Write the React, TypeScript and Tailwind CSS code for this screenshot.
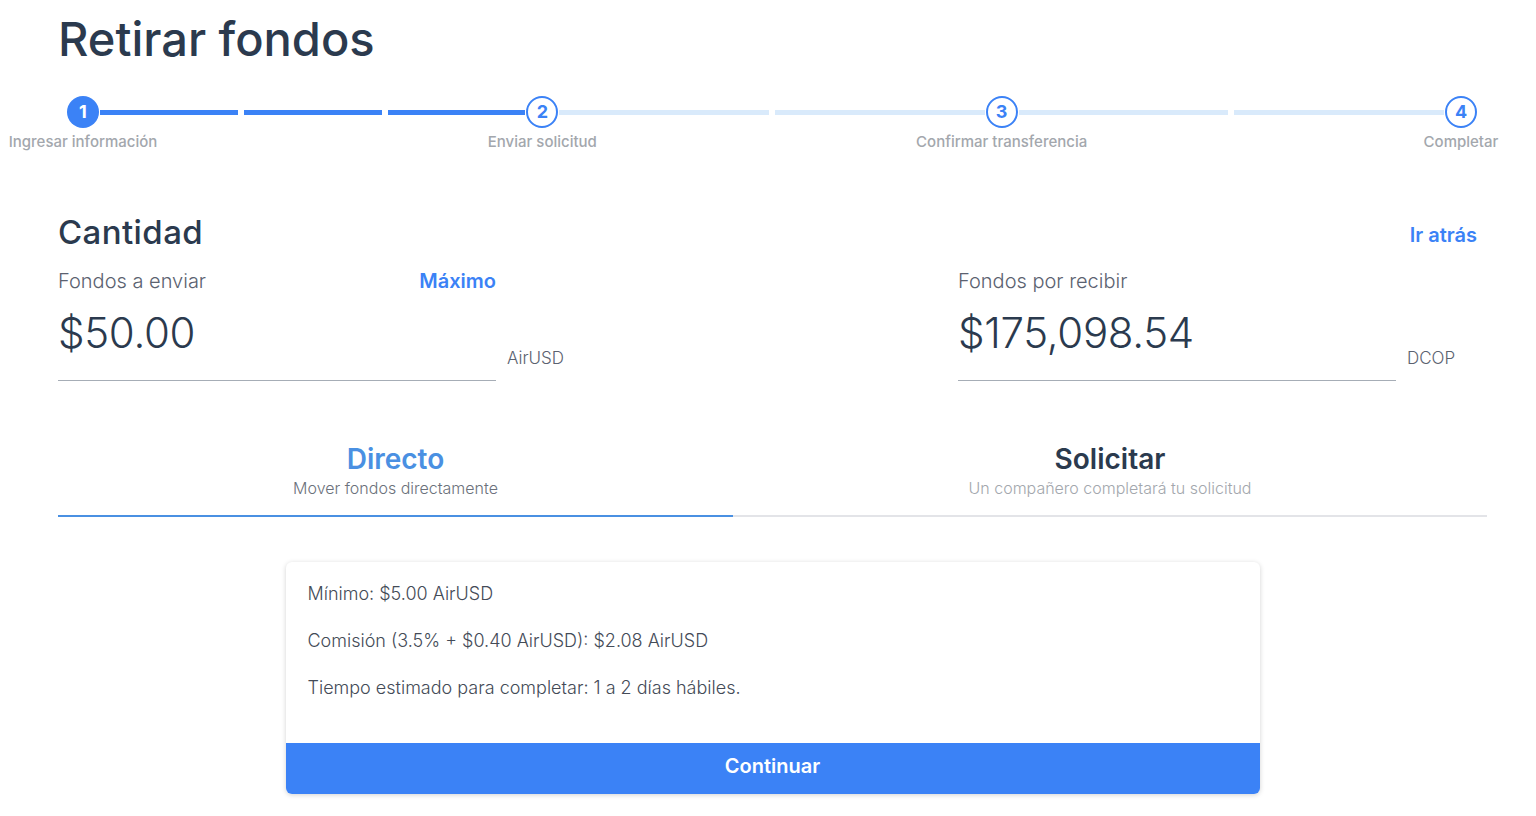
import React from 'react';

const steps = [
  { n: 1, label: 'Ingresar información' },
  { n: 2, label: 'Enviar solicitud' },
  { n: 3, label: 'Confirmar transferencia' },
  { n: 4, label: 'Completar' },
];

// segments per connector, and whether they are done
const connectors = [
  { parts: 3, done: true },
  { parts: 2, done: false },
  { parts: 2, done: false },
];

const StepCircle: React.FC<{ n: number; label: string; active: boolean }> = ({ n, label, active }) => (
  <div className="relative flex-shrink-0">
    {active ? (
      <div className="w-8 h-8 rounded-full bg-[#3b82f6] flex items-center justify-center text-white text-[18px] font-bold leading-none">
        {n}
      </div>
    ) : (
      <div className="w-8 h-8 rounded-full bg-white border-2 border-[#3b82f6] flex items-center justify-center text-[#3b82f6] text-[18px] font-bold leading-none">
        {n}
      </div>
    )}
    <div className="absolute top-full left-1/2 -translate-x-1/2 mt-[4px] whitespace-nowrap text-[15px] leading-[20px] font-medium text-[#a3a7ad]">
      {label}
    </div>
  </div>
);

const Connector: React.FC<{ parts: number; done: boolean }> = ({ parts, done }) => (
  <div className="flex-1 flex gap-[6px] px-[1px]">
    {Array.from({ length: parts }).map((_, i) => (
      <div key={i} className={`flex-1 h-[5px] ${done ? 'bg-[#3b82f6]' : 'bg-[#d9eafb]'}`} />
    ))}
  </div>
);

const AmountField: React.FC<{ label: string; action?: string; amount: string; unit: string }> = ({
  label,
  action,
  amount,
  unit,
}) => (
  <div className="flex items-end w-[520px]">
    <div className="w-[438px] border-b border-[#a6adb6]">
      <div className="flex justify-between items-center">
        <span className="text-[20px] leading-[20px] font-light text-[#5b6270]">{label}</span>
        {action && <span className="text-[20px] leading-[20px] font-semibold text-[#3b82f6]">{action}</span>}
      </div>
      <div className="mt-[21px] pb-[26px] text-[42px] leading-[42px] font-light text-[#2b3a4e] tracking-[-0.3px]">
        {amount}
      </div>
    </div>
    <span className="ml-[11px] mb-[14px] text-[17px] leading-[17px] font-light text-[#5b6270]">{unit}</span>
  </div>
);

export default function App() {
  return (
    <div className="min-h-screen bg-white font-['Inter',sans-serif] pt-[15px]">
      <h1 className="ml-[58px] text-[47px] leading-none font-medium text-[#2b3a4e]">Retirar fondos</h1>

      <div className="ml-[67px] w-[1410px] mt-[34px] flex items-center">
        {steps.map((s, i) => (
          <React.Fragment key={s.n}>
            <StepCircle n={s.n} label={s.label} active={i === 0} />
            {i < connectors.length && <Connector parts={connectors[i].parts} done={connectors[i].done} />}
          </React.Fragment>
        ))}
      </div>

      <div className="pl-[58px] pr-[49px] mt-[88px]">
        <div className="flex justify-between items-end pr-[10px]">
          <h2 className="text-[33px] leading-none font-medium text-[#2b3a4e] tracking-[0.4px]">Cantidad</h2>
          <a className="text-[20px] leading-none font-semibold text-[#3b82f6] mb-[4px]">Ir atrás</a>
        </div>

        <div className="flex justify-between mt-[22px] pr-[9px]">
          <AmountField label="Fondos a enviar" action="Máximo" amount="$50.00" unit="AirUSD" />
          <AmountField label="Fondos por recibir" amount="$175,098.54" unit="DCOP" />
        </div>

        <div className="mt-[64px] flex border-b-2 border-[#e3e4e8]">
          <div className="w-[675px] flex flex-col items-center pb-[19px] border-b-2 border-[#4a90e2] -mb-[2px]">
            <span className="text-[28px] leading-none font-semibold text-[#4a90e2]">Directo</span>
            <span className="mt-[7px] text-[16px] leading-[16px] font-light text-[#6b717b]">Mover fondos directamente</span>
          </div>
          <div className="flex-1 flex flex-col items-center pb-[19px]">
            <span className="text-[28px] leading-none font-semibold text-[#2b3a4e]">Solicitar</span>
            <span className="mt-[7px] text-[16px] leading-[16px] font-light text-[#a3a7ad]">
              Un compañero completará tu solicitud
            </span>
          </div>
        </div>

        <div className="mx-auto mt-[45px] w-[974px] rounded-md bg-white shadow-[0_1px_5px_rgba(0,0,0,0.18)] overflow-hidden">
          <div className="pt-[20px] pb-[43px] px-[22px] flex flex-col gap-[23px] text-[18px] leading-[24px] font-light text-[#444b57]">
            <p>Mínimo: $5.00 AirUSD</p>
            <p>Comisión (3.5% + $0.40 AirUSD): $2.08 AirUSD</p>
            <p>Tiempo estimado para completar: 1 a 2 días hábiles.</p>
          </div>
          <button className="w-full h-[51px] pb-[5px] bg-[#3b82f6] text-white text-[20px] font-semibold">Continuar</button>
        </div>
      </div>
    </div>
  );
}
